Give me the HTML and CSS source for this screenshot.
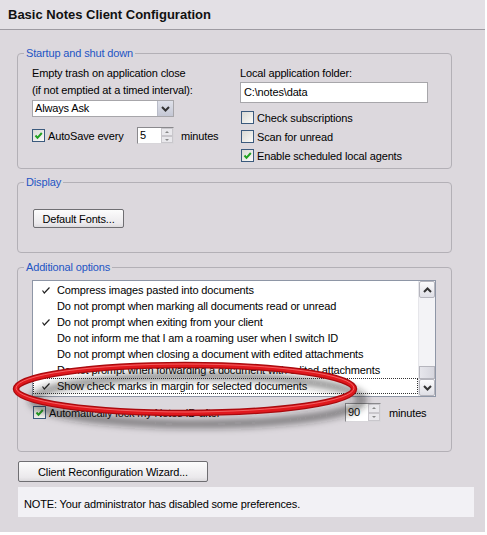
FILE: index.html
```html
<!DOCTYPE html>
<html>

<head>
  <title>Basic Notes Client Configuration</title>
  <link rel="stylesheet" href="styles.css">
</head>

<body>
  <div class="window">
    <header class="titlebar">
      <h1>Basic Notes Client Configuration</h1>
    </header>

    <div class="content">
      <!-- startup -->
      <fieldset class="group startup">
        <legend>Startup and shut down</legend>
        <div class="inner cols">
          <div class="col left">
            <p class="lbl">Empty trash on application close</p>
            <p class="lbl">(if not emptied at a timed interval):</p>
            <div class="select">
              <span class="value">Always Ask</span>
              <span class="drop">
                <svg width="9" height="6" viewBox="0 0 9 6"><path d="M1 1 L4.5 4.5 L8 1" fill="none" stroke="#333" stroke-width="2"/></svg>
              </span>
            </div>
            <div class="row autosave">
              <label class="check"><span class="box on"></span>AutoSave every</label>
              <div class="spin">
                <span class="num">5</span>
                <span class="arrows"><span class="up"></span><span class="down"></span></span>
              </div>
              <span class="unit">minutes</span>
            </div>
          </div>
          <div class="col right">
            <p class="lbl">Local application folder:</p>
            <div class="text-input">C:\notes\data</div>
            <label class="check"><span class="box"></span>Check subscriptions</label>
            <label class="check"><span class="box"></span>Scan for unread</label>
            <label class="check"><span class="box on"></span>Enable scheduled local agents</label>
          </div>
        </div>
      </fieldset>

      <!-- display -->
      <fieldset class="group display">
        <legend>Display</legend>
        <div class="inner">
          <button class="btn fonts">Default Fonts...</button>
        </div>
      </fieldset>

      <!-- additional -->
      <fieldset class="group additional">
        <legend>Additional options</legend>
        <div class="inner">
          <div class="listbox">
            <ul class="items">
              <li><span class="tick on"></span>Compress images pasted into documents</li>
              <li><span class="tick"></span>Do not prompt when marking all documents read or unread</li>
              <li><span class="tick on"></span>Do not prompt when exiting from your client</li>
              <li><span class="tick"></span>Do not inform me that I am a roaming user when I switch ID</li>
              <li><span class="tick"></span>Do not prompt when closing a document with edited attachments</li>
              <li><span class="tick"></span>Do not prompt when forwarding a document with edited attachments</li>
              <li class="focused"><span class="tick on"></span>Show check marks in margin for selected documents</li>
            </ul>
            <div class="scrollbar">
              <span class="sb-btn">
                <svg width="9" height="6" viewBox="0 0 9 6"><path d="M1 5 L4.5 1.5 L8 5" fill="none" stroke="#333" stroke-width="2"/></svg>
              </span>
              <span class="track"></span>
              <span class="thumb"></span>
              <span class="sb-btn">
                <svg width="9" height="6" viewBox="0 0 9 6"><path d="M1 1 L4.5 4.5 L8 1" fill="none" stroke="#333" stroke-width="2"/></svg>
              </span>
            </div>
          </div>
          <div class="row autolock">
            <label class="check"><span class="box on"></span>Automatically lock my Notes ID after</label>
            <div class="spin wide">
              <span class="num">90</span>
              <span class="arrows"><span class="up"></span><span class="down"></span></span>
            </div>
            <span class="unit">minutes</span>
          </div>
        </div>
      </fieldset>

      <button class="btn wizard">Client Reconfiguration Wizard...</button>

      <div class="note">NOTE: Your administrator has disabled some preferences.</div>
    </div>

    <!-- red highlight ring drawn over the list -->
    <svg class="mark" width="487" height="535" viewBox="0 0 487 535">
      <defs>
        <filter id="soft" x="-20%" y="-100%" width="140%" height="300%">
          <feGaussianBlur stdDeviation="3.5"/>
        </filter>
      </defs>
      <ellipse cx="198" cy="400" rx="165" ry="24" fill="none" stroke="#222" stroke-opacity="0.5" stroke-width="8" filter="url(#soft)"/>
      <ellipse cx="185" cy="389" rx="169" ry="24" fill="none" stroke="#a80a0e" stroke-width="6.5"/>
      <ellipse cx="185" cy="389" rx="169" ry="24" fill="none" stroke="#e0181d" stroke-width="4"/>
      <ellipse cx="185" cy="388" rx="169" ry="24" fill="none" stroke="#ff9090" stroke-opacity="0.6" stroke-width="1"/>
    </svg>
  </div>
</body>

</html>
```

FILE: styles.css
```css
* {
  box-sizing: border-box;
}

body {
  margin: 0;
  background: #fff;
  font-family: "Liberation Sans", Arial, sans-serif;
  font-size: 11px;
  letter-spacing: -0.15px;
  color: #000;
}

.window {
  position: relative;
  width: 485px;
  height: 532px;
  background: #dcd8dd;
}

.titlebar {
  height: 30px;
  display: flex;
  align-items: center;
  padding-left: 8px;
  background: #e3e0e5;
  border-bottom: 1px solid #9e9ba2;
}

.titlebar h1 {
  margin: 0;
  font-size: 13px;
  font-weight: bold;
  letter-spacing: 0;
  color: #111;
}

.content {
  padding: 16px 33px 0 17px;
}

/* group boxes */
.group {
  margin: 0;
  padding: 0;
  min-width: 0;
  border: 1px solid #b3b0b6;
  border-radius: 4px;
}

.group legend {
  margin-left: 6px;
  padding: 0 2px;
  line-height: 14px;
  color: #2355c4;
}

.display {
  margin-top: 6px;
}

.additional {
  margin-top: 7px;
}

.inner {
  padding: 0 14px;
}

.startup .inner {
  padding: 5px 14px 3px;
}

.display .inner {
  padding: 20px 15px 24px;
}

.additional .inner {
  padding: 6px 14px 29px;
}

.cols {
  display: flex;
}

.col.left {
  width: 208px;
}

.col.right {
  flex: 1;
}

.lbl {
  margin: 0;
  line-height: 16px;
  height: 16px;
}

.col.left .lbl + .lbl {
  margin-top: 1px;
}

/* combo */
.select {
  margin-top: 2px;
  width: 142px;
  height: 17px;
  display: flex;
  background: #fff;
  border: 1px solid #a7a6aa;
}

.select .value {
  flex: 1;
  padding-left: 2px;
  line-height: 15px;
}

.select .drop {
  width: 16px;
  display: flex;
  align-items: center;
  justify-content: center;
  background: linear-gradient(#dfe1ea, #c4c7d4);
  border-left: 1px solid #b9bcc8;
}

.row {
  display: flex;
  align-items: center;
}

.autosave {
  margin-top: 10px;
  height: 17px;
}

.autosave .check {
  width: 105px;
}

.autolock {
  margin-top: 6px;
  height: 19px;
}

.autolock .check {
  width: 313px;
  padding-left: 1px;
}

.unit {
  margin-left: 7px;
}

.autolock .unit {
  margin-left: 8px;
}

/* checkboxes */
.check {
  display: flex;
  align-items: center;
  gap: 3px;
  height: 19px;
  white-space: nowrap;
}

.col.right .check {
  padding-left: 1px;
}

.box {
  width: 13px;
  height: 13px;
  flex: none;
  border: 1px solid #3b5a7d;
  background: linear-gradient(135deg, #d9d9d4, #fbfbf9);
}

.box.on {
  background:
    url("data:image/svg+xml;utf8,<svg xmlns='http://www.w3.org/2000/svg' width='11' height='11'><path d='M2.5 5.5 L4.5 7.8 L8.8 3' fill='none' stroke='%2321a121' stroke-width='2'/></svg>") center no-repeat,
    linear-gradient(135deg, #d9d9d4, #fbfbf9);
}

.text-input {
  margin-top: 1px;
  width: 188px;
  height: 21px;
  padding-left: 3px;
  line-height: 19px;
  background: #fff;
  border: 1px solid #a7a6aa;
  margin-bottom: 5px;
}

/* spinners */
.spin {
  width: 37px;
  height: 17px;
  display: flex;
  background: #fff;
  border: 1px solid #8a898d;
  border-right-color: #d8d6da;
  border-bottom-color: #d8d6da;
}

.spin.wide {
  width: 36px;
  height: 19px;
}

.spin .num {
  flex: 1;
  padding-left: 2px;
  line-height: 15px;
}

.spin.wide .num {
  line-height: 17px;
}

.arrows {
  width: 12px;
  display: flex;
  flex-direction: column;
}

.arrows span {
  flex: 1;
  border: 1px solid #c9c7cc;
  background: #e9e8ec;
  position: relative;
}

.arrows .up::after,
.arrows .down::after {
  content: "";
  position: absolute;
  left: 3px;
  top: 2px;
  border-left: 2px solid transparent;
  border-right: 2px solid transparent;
}

.arrows .up::after {
  border-bottom: 2px solid #888;
}

.arrows .down::after {
  border-top: 2px solid #888;
}

/* buttons */
.btn {
  display: block;
  font-family: inherit;
  font-size: 11px;
  letter-spacing: -0.15px;
  color: #000;
  background: linear-gradient(#fcfcfc, #ebe9ec 80%, #dcdadd);
  border: 1px solid #6f6e72;
  border-radius: 2px;
  padding: 0;
}

.fonts {
  width: 91px;
  height: 19px;
}

.wizard {
  margin: 9px 0 0 1px;
  width: 190px;
  height: 21px;
}

/* list */
.listbox {
  width: 404px;
  height: 117px;
  display: flex;
  background: #fff;
  border: 1px solid #8e96a6;
  padding-top: 1px;
}

.items {
  flex: 1;
  list-style: none;
  margin: 0;
  padding: 0;
}

.items li {
  height: 16px;
  line-height: 16px;
  display: flex;
  align-items: center;
  white-space: nowrap;
}

.items li.focused {
  outline: 1px dotted #333;
  outline-offset: -1px;
}

.tick {
  width: 24px;
  height: 16px;
  flex: none;
}

.tick.on {
  background: url("data:image/svg+xml;utf8,<svg xmlns='http://www.w3.org/2000/svg' width='24' height='16'><path d='M9.5 8.5 L11.3 11 L16.5 5.5' fill='none' stroke='%23222' stroke-width='1.2'/></svg>") no-repeat;
}

.scrollbar {
  width: 17px;
  margin-top: -1px;
  display: flex;
  flex-direction: column;
  background: #f3f3f6;
  border-left: 1px solid #e6e6ea;
}

.sb-btn {
  height: 17px;
  display: flex;
  align-items: center;
  justify-content: center;
  background: linear-gradient(#fbfbfc, #dfdfe6);
  border: 1px solid #b5b5bd;
  border-radius: 2px;
}

.track {
  flex: 1;
}

.thumb {
  height: 13px;
  background: linear-gradient(90deg, #e6e6ec, #d6d6de);
  border: 1px solid #b5b5bd;
}

/* footer note */
.note {
  margin: 5px -22px 0 1px;
  height: 30px;
  padding: 3px 0 0 6px;
  display: flex;
  align-items: center;
  background: #f2f1f5;
}

.mark {
  position: absolute;
  top: 0;
  left: 0;
  pointer-events: none;
}
```
